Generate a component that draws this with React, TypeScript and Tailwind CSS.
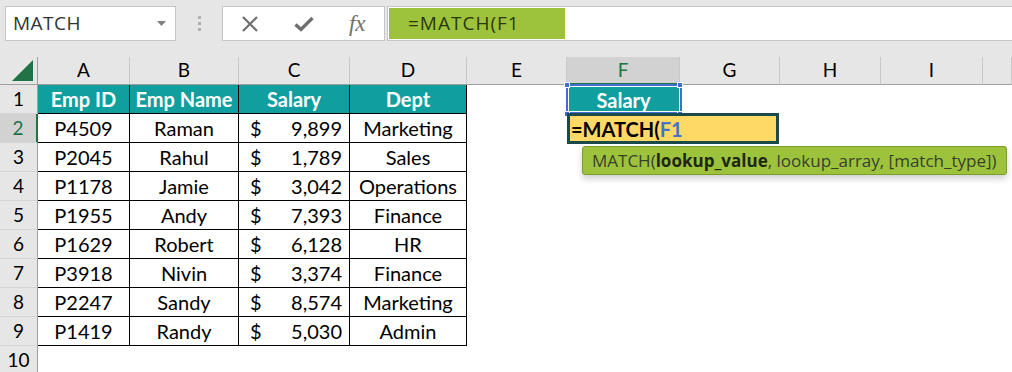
import React from 'react';

const TEAL = 'bg-[#119e9e]';

type Row = { id: string; name: string; salary: string; dept: string };

const rows: Row[] = [
  { id: 'P4509', name: 'Raman', salary: '9,899', dept: 'Marketing' },
  { id: 'P2045', name: 'Rahul', salary: '1,789', dept: 'Sales' },
  { id: 'P1178', name: 'Jamie', salary: '3,042', dept: 'Operations' },
  { id: 'P1955', name: 'Andy', salary: '7,393', dept: 'Finance' },
  { id: 'P1629', name: 'Robert', salary: '6,128', dept: 'HR' },
  { id: 'P3918', name: 'Nivin', salary: '3,374', dept: 'Finance' },
  { id: 'P2247', name: 'Sandy', salary: '8,574', dept: 'Marketing' },
  { id: 'P1419', name: 'Randy', salary: '5,030', dept: 'Admin' },
];

const letters = ['A', 'B', 'C', 'D', 'E', 'F', 'G', 'H', 'I', ''];

function FormulaBar() {
  return (
    <div className="h-[57px] bg-[#e6e6e6] flex items-start pt-[6px] font-['Open_Sans',sans-serif]">
      {/* name box */}
      <div className="ml-[5px] w-[171px] h-[35px] bg-white border border-[#c6c6c6] flex items-center pl-[7px] pr-[9px]">
        <span className="text-[19px] tracking-[0.5px] text-[#333] flex-1 leading-none">MATCH</span>
        <svg width="9" height="5" viewBox="0 0 9 5">
          <path d="M0 0 H9 L4.5 5 Z" fill="#808080" />
        </svg>
      </div>
      {/* grip */}
      <div className="w-[46px] h-[35px] flex flex-col items-center justify-center gap-[3px]">
        <div className="w-[3px] h-[3px] bg-[#b0b0b0]" />
        <div className="w-[3px] h-[3px] bg-[#b0b0b0]" />
        <div className="w-[3px] h-[3px] bg-[#b0b0b0]" />
      </div>
      {/* cancel / enter / fx */}
      <div className="w-[163px] h-[35px] bg-white border border-[#c6c6c6] flex items-center">
        <div className="w-[54px] flex justify-center">
          <svg width="18" height="16" viewBox="0 0 18 16">
            <path d="M2 1 L16 15 M16 1 L2 15" stroke="#6f6f6f" strokeWidth="2.2" />
          </svg>
        </div>
        <div className="w-[54px] flex justify-center">
          <svg width="20" height="16" viewBox="0 0 20 16">
            <path d="M1.5 8.5 L7 13.5 L18.5 2" stroke="#6f6f6f" strokeWidth="3.4" fill="none" />
          </svg>
        </div>
        <div className="w-[54px] flex justify-center">
          <span className="font-['Liberation_Serif',serif] italic text-[23px] text-[#6f6f6f] leading-none">
            fx
          </span>
        </div>
      </div>
      {/* formula input */}
      <div className="ml-[2px] flex-1 h-[35px] bg-white border border-[#c6c6c6] border-r-0 p-px">
        <div className="w-[176px] h-full bg-[#9cc33b] flex items-center pl-[19px]">
          <span className="text-[19px] tracking-[1px] text-[#2b3810] leading-none">=MATCH(F1</span>
        </div>
      </div>
    </div>
  );
}

function ColHeader({ letter }: { letter: string }) {
  const active = letter === 'F';
  return (
    <div
      className={
        'flex items-center justify-center text-[19px] border-r border-[#c8c8c8] ' +
        (active
          ? 'bg-[#d2d2d2] text-[#217346] border-b-2 border-b-[#217346]'
          : 'bg-[#e6e6e6] text-black border-b border-b-[#9f9f9f]')
      }
    >
      {letter}
    </div>
  );
}

function RowHeader({ n }: { n: number }) {
  const active = n === 2;
  return (
    <div
      className={
        'flex items-center justify-center text-[19px] border-b border-[#d4d4d4] ' +
        (active
          ? 'bg-[#d2d2d2] text-[#217346] border-r-2 border-r-[#217346]'
          : 'bg-[#e6e6e6] text-black border-r border-r-[#9f9f9f]')
      }
    >
      {n}
    </div>
  );
}

function HeadCell({ children }: { children: React.ReactNode }) {
  return (
    <div className={`${TEAL} border-r border-b border-black flex items-center justify-center text-white font-bold text-[20px]`}>
      {children}
    </div>
  );
}

function DataCell({ children }: { children: React.ReactNode }) {
  return (
    <div className="border-r border-b border-black flex items-center justify-center text-[20px] text-black">
      {children}
    </div>
  );
}

function SalaryCell({ value }: { value: string }) {
  return (
    <div className="border-r border-b border-black flex items-center justify-between pl-[11px] pr-[7px] text-[20px] text-black">
      <span>$</span>
      <span>{value}</span>
    </div>
  );
}

function Corner({ x, y }: { x: string; y: string }) {
  return <div className={`absolute w-[6px] h-[6px] bg-[#3f6fd1] border border-white ${x} ${y}`} />;
}

function ActiveF1() {
  return (
    <div className={`${TEAL} relative flex items-center justify-center text-white font-bold text-[20px]`}>
      Salary
      <div className="absolute -left-px -top-px w-[116px] h-[30px] border-2 border-[#3f6fd1]">
        <div className="w-full h-full border border-white" />
      </div>
      <Corner x="-left-[3px]" y="-top-[3px]" />
      <Corner x="-right-[3px]" y="-top-[3px]" />
      <Corner x="-left-[3px]" y="-bottom-[3px]" />
      <Corner x="-right-[3px]" y="-bottom-[3px]" />
    </div>
  );
}

function Editor() {
  return (
    <div className="col-span-2 relative z-10">
      <div className="absolute -top-px left-0 w-[212px] h-[31px] bg-[#ffd966] border-[3px] border-[#1b4a4b] flex items-center pl-px font-bold text-[20px]">
        <span className="text-black">=MATCH(</span>
        <span className="text-[#4472c4]">F1</span>
      </div>
      <div className="absolute left-[15px] top-[32px] w-[425px] h-[29px] bg-[#9cc33b] border border-[#7c9c2b] rounded-[3px] shadow-[0_4px_6px_rgba(0,0,0,0.18)] flex items-center pl-[9px] font-['Open_Sans',sans-serif] text-[17px] text-[#3a3f2c] whitespace-nowrap">
        MATCH(<b className="font-bold text-[#1f2612]">lookup_value</b>, lookup_array, [match_type])
      </div>
    </div>
  );
}

function Blank() {
  return <div />;
}

export default function App() {
  return (
    <div className="w-[1012px] h-[372px] overflow-hidden bg-white font-['Lato',sans-serif]">
      <FormulaBar />
      <div className="grid grid-cols-[38px_92px_109px_111px_117px_100px_113px_100px_101px_102px_1fr] grid-rows-[28px_repeat(10,29px)]">
        {/* column headers */}
        <div className="bg-[#e6e6e6] border-r border-b border-[#9f9f9f] flex items-end justify-end pr-[4px] pb-[3px]">
          <svg width="21" height="21" viewBox="0 0 21 21">
            <path d="M21 0 V21 H0 Z" fill="#217346" />
          </svg>
        </div>
        {letters.map((l, i) => (
          <ColHeader key={i} letter={l} />
        ))}

        {/* row 1 */}
        <RowHeader n={1} />
        <HeadCell>Emp ID</HeadCell>
        <HeadCell>Emp Name</HeadCell>
        <HeadCell>Salary</HeadCell>
        <HeadCell>Dept</HeadCell>
        <Blank />
        <ActiveF1 />
        <Blank />
        <Blank />
        <Blank />
        <Blank />

        {rows.map((r, i) => (
          <React.Fragment key={r.id}>
            <RowHeader n={i + 2} />
            <DataCell>{r.id}</DataCell>
            <DataCell>{r.name}</DataCell>
            <SalaryCell value={r.salary} />
            <DataCell>{r.dept}</DataCell>
            <Blank />
            {i === 0 ? (
              <Editor />
            ) : (
              <>
                <Blank />
                <Blank />
              </>
            )}
            <Blank />
            <Blank />
            <Blank />
          </React.Fragment>
        ))}

        <RowHeader n={10} />
        {letters.map((_, i) => (
          <Blank key={i} />
        ))}
      </div>
    </div>
  );
}
